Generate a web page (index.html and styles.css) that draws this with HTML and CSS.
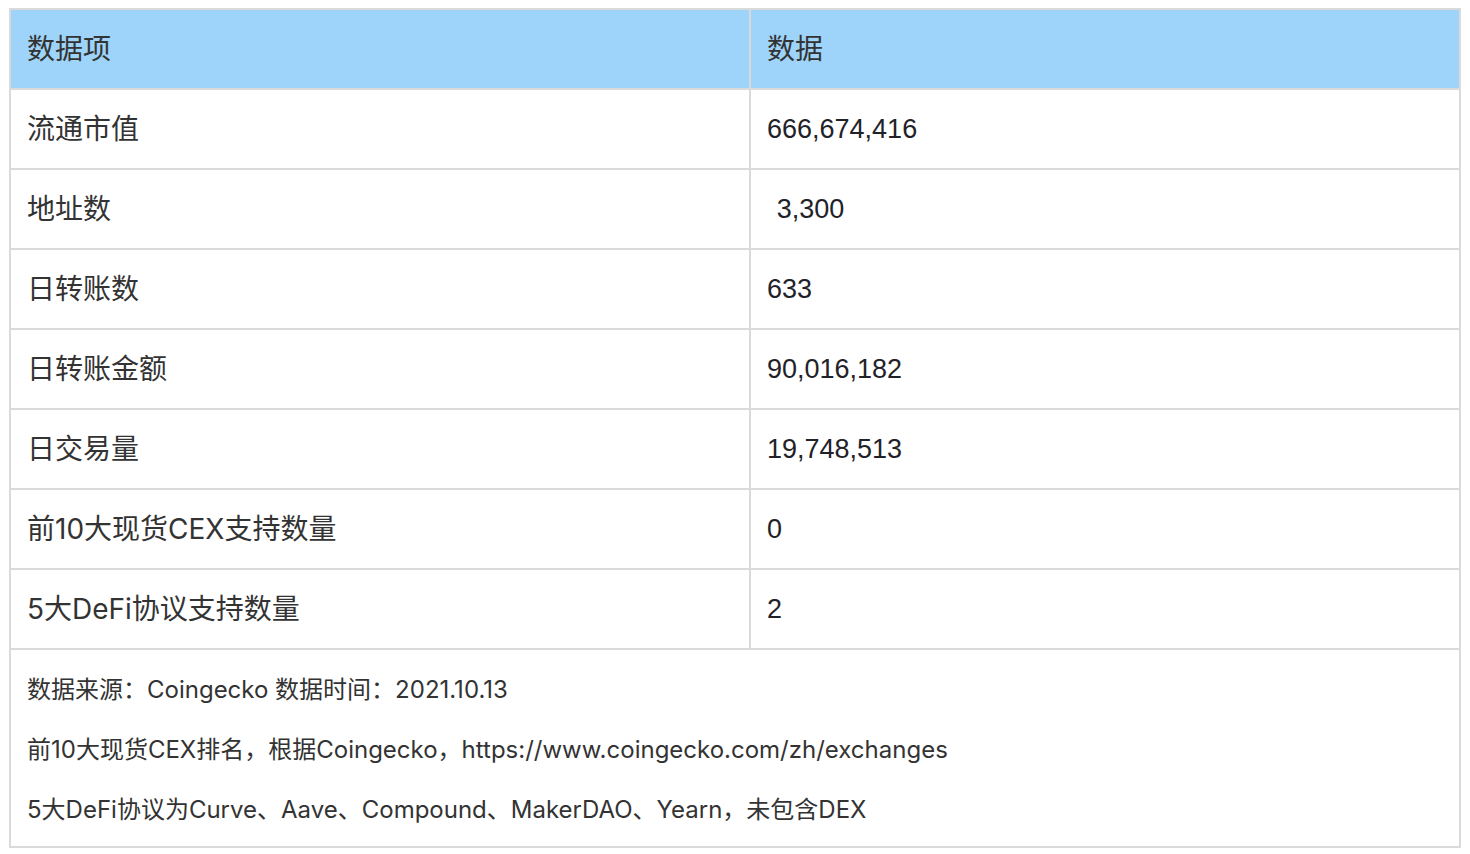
FILE: index.html
```html
<!DOCTYPE html>
<html lang="zh">
<head>
<meta charset="utf-8">
<title>数据</title>
<link rel="stylesheet" href="styles.css">
</head>
<body>
<div class="table">
  <div class="row head">
    <div class="cell key">数据项</div>
    <div class="cell">数据</div>
  </div>
  <div class="row">
    <div class="cell key">流通市值</div>
    <div class="cell val">666,674,416</div>
  </div>
  <div class="row">
    <div class="cell key">地址数</div>
    <div class="cell val">&nbsp;&#8202;3,300</div>
  </div>
  <div class="row">
    <div class="cell key">日转账数</div>
    <div class="cell val">633</div>
  </div>
  <div class="row">
    <div class="cell key">日转账金额</div>
    <div class="cell val">90,016,182</div>
  </div>
  <div class="row">
    <div class="cell key">日交易量</div>
    <div class="cell val">19,748,513</div>
  </div>
  <div class="row">
    <div class="cell key">前10大现货CEX支持数量</div>
    <div class="cell val">0</div>
  </div>
  <div class="row">
    <div class="cell key">5大DeFi协议支持数量</div>
    <div class="cell val">2</div>
  </div>
  <div class="foot">
    <p>数据来源：Coingecko 数据时间：2021.10.13</p>
    <p>前10大现货CEX排名，根据Coingecko，https://www.coingecko.com/zh/exchanges</p>
    <p>5大DeFi协议为Curve、Aave、Compound、MakerDAO、Yearn，未包含DEX</p>
  </div>
</div>
</body>
</html>
```
FILE: styles.css
```css
html, body {
  margin: 0;
  padding: 0;
  background: #ffffff;
}
body {
  font-family: Inter, "Noto Sans CJK SC", sans-serif;
  color: #333333;
}
.table {
  margin: 8px 0 0 9px;
  width: 1452px;
  border: 2px solid #dadada;
  box-sizing: border-box;
}
.row {
  display: grid;
  grid-template-columns: 740px 708px;
  height: 80px;
  border-bottom: 2px solid #dadada;
  box-sizing: border-box;
}
.head {
  background: #9ed4f9;
}
.cell {
  display: flex;
  align-items: center;
  padding: 0 16px 4px;
  font-size: 28px;
  box-sizing: border-box;
  white-space: pre;
}
.key {
  border-right: 2px solid #dadada;
}
.val {
  font-family: "Liberation Sans", "Noto Sans CJK SC", sans-serif;
  font-size: 27px;
  color: #1f2329;
  padding-bottom: 0;
}
.foot {
  height: 196px;
  padding: 10px 16px 6px;
  box-sizing: border-box;
}
.foot p {
  margin: 0;
  height: 60px;
  line-height: 60px;
  font-size: 24px;
  white-space: nowrap;
}
```
